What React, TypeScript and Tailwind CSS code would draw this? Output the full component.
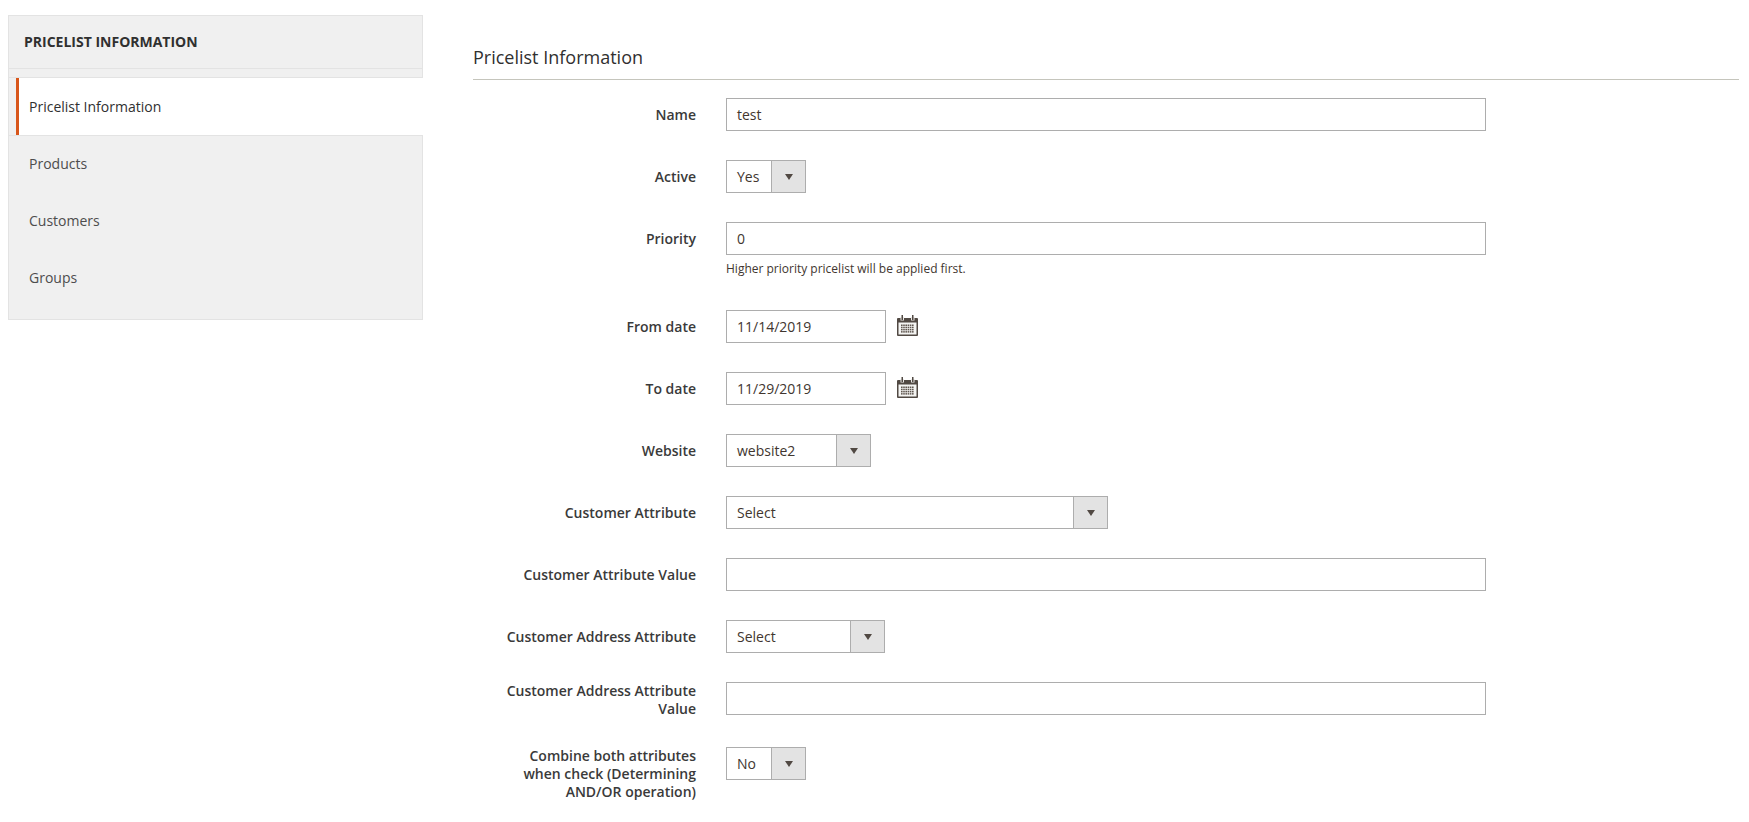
import React from "react";

function CalendarIcon() {
  return (
    <svg width="21" height="21" viewBox="0 0 21 21" className="ml-[11px] mt-[5px] shrink-0">
      <rect x="0" y="3" width="21" height="18" rx="1" fill="#514943" />
      <rect x="1.5" y="7.5" width="18" height="12" fill="#f4f4f2" />
      <rect x="3.5" y="2" width="3.5" height="3.5" fill="#e9e7e4" />
      <rect x="14" y="2" width="3.5" height="3.5" fill="#e9e7e4" />
      <rect x="4.5" y="0" width="1.5" height="5" fill="#514943" />
      <rect x="15" y="0" width="1.5" height="5" fill="#514943" />
      {[9.5, 11.7, 13.9, 16.1].map((y) =>
        [4, 6.2, 8.4, 10.6, 12.8, 15].map((x) => (
          <rect key={`${x}-${y}`} x={x} y={y} width="1.6" height="1.5" fill="#5f564f" />
        ))
      )}
    </svg>
  );
}

function Label({ children, multi }: { children: React.ReactNode; multi?: boolean }) {
  return (
    <div className={multi ? "w-[198px] shrink-0 text-right font-semibold text-[14px] leading-[18px] text-[#3a3a3a]" : "w-[198px] shrink-0 pt-2 text-right font-semibold text-[14px] leading-[18px] text-[#3a3a3a]"}>
      {children}
    </div>
  );
}

function TextInput({ value, className }: { value?: string; className: string }) {
  return (
    <div className={`h-[33px] border border-[#adadad] bg-white pl-[10px] text-[14px] leading-[31px] text-[#41362f] ${className}`}>
      {value}
    </div>
  );
}

function Select({ value, className }: { value: string; className: string }) {
  return (
    <div className={`flex h-[33px] border border-[#adadad] bg-white ${className}`}>
      <div className="flex-1 pl-[10px] text-[14px] leading-[31px] text-[#41362f]">{value}</div>
      <div className="flex w-[34px] shrink-0 items-center justify-center border-l border-[#adadad] bg-[#e3e3e3]">
        <svg width="8" height="6" viewBox="0 0 8 6">
          <path d="M0 0H8L4 6Z" fill="#514943" />
        </svg>
      </div>
    </div>
  );
}

function Row({ children, className }: { children: React.ReactNode; className?: string }) {
  return <div className={`flex ${className ?? "mb-[29px]"}`}>{children}</div>;
}

export default function App() {
  return (
    <div className="flex h-[822px] overflow-hidden bg-white font-['Open_Sans',sans-serif]">
      <aside className="ml-2 mt-[15px] h-[305px] w-[415px] shrink-0 border border-[#e3e3e3] bg-[#f0f0f0]">
        <div className="h-[53px] border-b border-[#e3e3e3] pl-[15px] pt-[17px] text-[14px] font-bold uppercase leading-[18px] text-[#303030]">
          Pricelist Information
        </div>
        <div className="h-[9px] border-b border-[#e3e3e3]" />
        <div className="ml-[7px] mr-[-1px] h-[57px] border-l-[3px] border-[#d8561a] bg-white pl-[10px] text-[14px] leading-[57px] text-[#303030]">
          Pricelist Information
        </div>
        <div className="border-t border-[#e3e3e3] pl-5 text-[14px] text-[#4d4d4d]">
          <div className="h-[57px] leading-[56px]">Products</div>
          <div className="h-[57px] leading-[56px]">Customers</div>
          <div className="h-[57px] leading-[56px]">Groups</div>
        </div>
      </aside>

      <main className="ml-[50px] mr-[10px] flex-1 pt-[45px]">
        <div className="mb-[18px] h-[35px] border-b border-[#c5c5bc] text-[18px] font-normal leading-[24px] text-[#303030]">
          Pricelist Information
        </div>
        <div className="pl-[25px]">
          <Row>
            <Label>Name</Label>
            <TextInput value="test" className="ml-[30px] w-[760px]" />
          </Row>
          <Row>
            <Label>Active</Label>
            <Select value="Yes" className="ml-[30px] w-[80px]" />
          </Row>
          <Row>
            <Label>Priority</Label>
            <div className="ml-[30px] w-[760px]">
              <TextInput value="0" className="w-full" />
              <div className="mt-[5px] pb-[3px] text-[12px] leading-[18px] text-[#41362f]">
                Higher priority pricelist will be applied first.
              </div>
            </div>
          </Row>
          <Row>
            <Label>From date</Label>
            <TextInput value="11/14/2019" className="ml-[30px] w-[160px]" />
            <CalendarIcon />
          </Row>
          <Row>
            <Label>To date</Label>
            <TextInput value="11/29/2019" className="ml-[30px] w-[160px]" />
            <CalendarIcon />
          </Row>
          <Row>
            <Label>Website</Label>
            <Select value="website2" className="ml-[30px] w-[145px]" />
          </Row>
          <Row>
            <Label>Customer Attribute</Label>
            <Select value="Select" className="ml-[30px] w-[382px]" />
          </Row>
          <Row>
            <Label>Customer Attribute Value</Label>
            <TextInput className="ml-[30px] w-[760px]" />
          </Row>
          <Row>
            <Label>Customer Address Attribute</Label>
            <Select value="Select" className="ml-[30px] w-[159px]" />
          </Row>
          <Row>
            <Label multi>Customer Address Attribute Value</Label>
            <TextInput className="ml-[30px] w-[760px]" />
          </Row>
          <Row className="mb-0">
            <Label multi>Combine both attributes when check (Determining AND/OR operation)</Label>
            <Select value="No" className="ml-[30px] w-[80px]" />
          </Row>
        </div>
      </main>
    </div>
  );
}
